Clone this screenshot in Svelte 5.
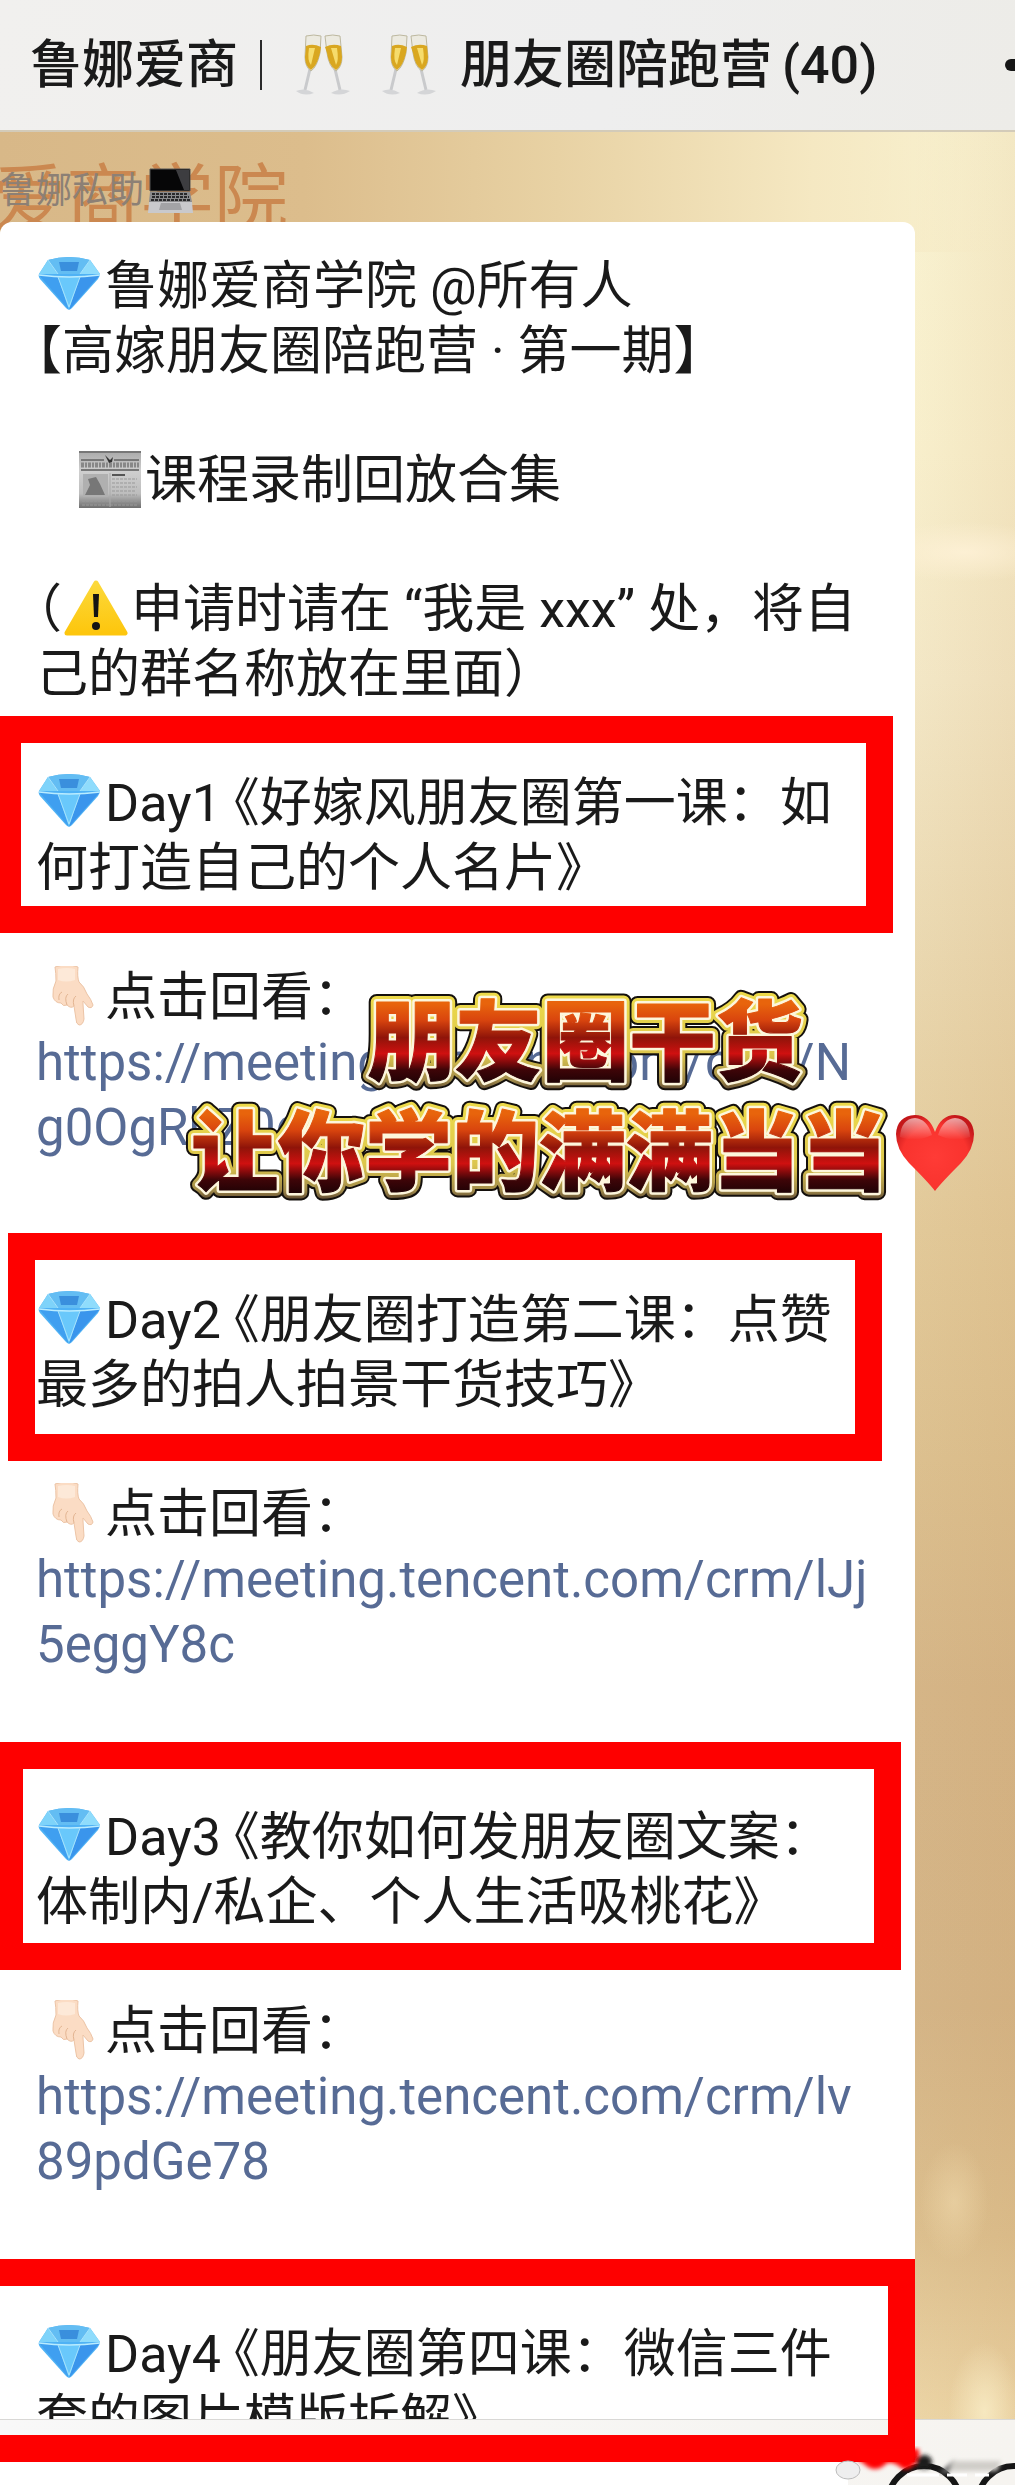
<script lang="ts">
  interface Frame {
    top: number
    right: number
    bottom: number
    left: number
  }

  interface Lesson {
    day: number
    title: string
    url: string | null
    frame: Frame
  }

  const lessons: Lesson[] = [
    {
      day: 1,
      title: '好嫁风朋友圈第一课：如何打造自己的个人名片》',
      url: 'https://meeting.tencent.com/crm/Ng0OgRhZ0c',
      frame: { top: -55, right: -24, bottom: -32, left: -42 },
    },
    {
      day: 2,
      title: '朋友圈打造第二课：点赞最多的拍人拍景干货技巧》',
      url: 'https://meeting.tencent.com/crm/lJj5eggY8c',
      frame: { top: -55, right: -13, bottom: -43, left: -28 },
    },
    {
      day: 3,
      title: '教你如何发朋友圈文案：体制内/私企、个人生活吸桃花》',
      url: 'https://meeting.tencent.com/crm/lv89pdGe78',
      frame: { top: -63, right: -32, bottom: -35, left: -40 },
    },
    {
      day: 4,
      title: '朋友圈第四课：微信三件套的图片模版拆解》',
      url: null,
      frame: { top: -63, right: -46, bottom: -10, left: -66 },
    },
  ]

  const banner = [
    { text: '朋友圈干货', heart: false },
    { text: '让你学的满满当当', heart: true },
  ]

  function frameStyle(f: Frame) {
    return `top:${f.top}px;right:${f.right}px;bottom:${f.bottom}px;left:${f.left}px`
  }
</script>

{#snippet gem()}
  <svg class="emoji" viewBox="0 0 69 60" aria-hidden="true">
    <path d="M12 5 Q33 -1 54 5 L64 19 Q64 21 62 24 L36 53 Q33 56 30 53 L4 24 Q2 21 3 19 Z" fill="#4fb2f5" />
    <path d="M12 5 L22 19 L3 19 Z" fill="#7ed3fa" />
    <path d="M12 5 Q33 -1 54 5 L44 19 L22 19 Z" fill="#63bdf3" />
    <path d="M23 7 H43 L41 16 H25 Z" fill="#3a8fdd" />
    <path d="M54 5 L64 19 L44 19 Z" fill="#8fdcfc" />
    <path d="M3 20 L22 22 L33 55 Z" fill="#3f9ff0" />
    <path d="M22 22 H44 L33 55 Z" fill="#69c8fb" />
    <path d="M44 22 L64 20 L33 55 Z" fill="#3a95ec" />
    <path d="M3 20 Q33 24 64 20" fill="none" stroke="#b9ecff" stroke-width="1.5" />
    <path d="M12 5 L22 19 M54 5 L44 19 M22 22 L33 52 M44 22 L33 52" stroke="#a6e2fc" fill="none" />
  </svg>
{/snippet}

{#snippet hand()}
  <svg class="emoji" viewBox="0 0 69 60" aria-hidden="true">
    <path
      d="M19 1 Q31 -3 42 1 Q41 11 43 16 Q48 20 51 28 Q55 33 57 39 Q56 43 52 41 L47 35 L47 38 L48 53 Q47 59 43 59 Q40 58 40 53 L38 40 Q35 43 31 39 Q27 41 25 37 Q19 37 17 31 Q16 23 20 15 Q20 7 19 1 Z"
      fill="#fbdcc4"
      stroke="#ecc4a6"
    />
    <path d="M23 34 Q22 28 26 26 M31 39 Q28 31 32 28 M38 40 Q36 33 40 30" fill="none" stroke="#e3b592" />
    <path d="M22 3 Q31 1 39 3 L39 14 Q30 17 22 14 Z" fill="#fde9d8" />
  </svg>
{/snippet}

{#snippet glasses()}
  <svg class="glasses" viewBox="0 0 58 64" aria-hidden="true">
    <path d="M16 36 L11 57 M41 36 L46 57" stroke="#c9cacc" stroke-width="3" />
    <path d="M2 58 Q11 54 20 60 Q10 64 2 58 Z M37 60 Q46 54 56 58 Q47 64 37 60 Z" fill="#d4d5d7" />
    <path d="M12 3 Q20 1 27 3 L26 20 Q23 34 17 38 Q11 34 11 24 Z" fill="#eceae0" stroke="#bdb89f" />
    <path d="M31 3 Q39 1 46 3 L48 24 Q48 34 42 38 Q35 34 33 20 Z" fill="#eceae0" stroke="#bdb89f" />
    <path d="M12 13 Q19 10 27 14 L26 20 Q23 33 17 37 Q11 33 11 24 Z" fill="#d9a720" />
    <path d="M31 14 Q39 10 47 13 L48 24 Q48 33 42 37 Q35 33 33 20 Z" fill="#d9a720" />
    <path d="M15 15 L21 15 L17 32 Q13 28 15 15 Z M37 15 L43 15 Q45 28 42 32 Z" fill="#f6dc6c" />
  </svg>
{/snippet}

<div class="page">
  <header class="topbar">
    <h1 class="room">
      <span>鲁娜爱商</span>
      <span class="bar"></span>
      {@render glasses()}
      {@render glasses()}
      <span>朋友圈陪跑营</span>
      <span class="count">(40)</span>
    </h1>
    <button class="more" aria-label="更多"></button>
  </header>

  <main class="chat">
    <div class="watermark" aria-hidden="true">爱商学院</div>

    <div class="sender">
      <span>鲁娜私助</span>
      <svg class="laptop" viewBox="0 0 46 48" aria-hidden="true">
        <path d="M2 2 H42 V24 H2 Z" fill="#060607" stroke="#555" />
        <path d="M28 3 H41 V23 H36 Z" fill="#3d3d40" />
        <path d="M2 25 H42 L44 35 H1 Z" fill="#8b8b8d" />
        <path d="M4 27 H40 M4 30 H41 M3 33 H42" stroke="#29292b" stroke-width="2" stroke-dasharray="3 1" />
        <path d="M1 35 H44 L45 46 H0 Z" fill="#c9c9cc" />
        <path d="M13 36 H32 L34 43 H11 Z" fill="#a3a3a6" />
      </svg>
    </div>

    <article class="bubble">
      <p>
        {@render gem()}鲁娜爱商学院 @所有人<br />
        <span class="half">【</span>高嫁朋友圈陪跑营 · 第一期】
      </p>

      <p class="indent">
        <svg class="emoji" viewBox="0 0 69 60" aria-hidden="true">
          <defs>
            <linearGradient id="paper" x1="0" y1="0" x2="0" y2="1">
              <stop offset="0" stop-color="#a9a9a9" />
              <stop offset="0.35" stop-color="#cfcfcf" />
              <stop offset="0.75" stop-color="#bdbdbd" />
              <stop offset="1" stop-color="#6e6e6e" />
            </linearGradient>
          </defs>
          <rect x="3" y="2" width="62" height="57" fill="url(#paper)" />
          <path d="M3 3 H65 M5 11 H28 M38 11 H63 M5 21 H63" stroke="#777" stroke-width="2" />
          <path d="M5 16 H63" stroke="#888" stroke-width="5" stroke-dasharray="3 1 2 1" />
          <path d="M29 6 L34 11 L37 8 L36 13 L33 14 Z" fill="#333" />
          <rect x="7" y="25" width="25" height="23" fill="#b0b0b0" />
          <path d="M9 46 L14 36 L12 30 L20 28 L24 35 L29 46 Z" fill="#777" />
          <path d="M36 26 H49" stroke="#555" stroke-width="2" />
          <path d="M36 30 H61 M36 34 H60 M36 38 H61 M36 42 H60 M36 46 H61 M6 52 H62 M6 56 H62" stroke="#999" stroke-dasharray="3 1" />
          <path d="M34 24 V58" stroke="#aaa" />
        </svg>课程录制回放合集
      </p>

      <p>
        <span class="half">（</span><svg class="emoji" viewBox="0 0 69 60" aria-hidden="true">
          <defs>
            <linearGradient id="amber" x1="0" y1="0" x2="0" y2="1">
              <stop offset="0" stop-color="#fcd93a" />
              <stop offset="1" stop-color="#fdc60d" />
            </linearGradient>
          </defs>
          <path d="M34 5 L63 55 H5 Z" fill="url(#amber)" stroke="url(#amber)" stroke-width="5" stroke-linejoin="round" />
          <path d="M31 16 H37 L36 39 H32 Z" fill="#141414" />
          <circle cx="34" cy="48" r="4" fill="#141414" />
        </svg>申请时请在 “我是 xxx” 处，将自己的群名称放在里面）
      </p>

      {#each lessons as lesson (lesson.day)}
        <section class="lesson">
          <h2>
            {@render gem()}Day{lesson.day} <span class="half">《</span>{lesson.title}
            <span class="frame" style={frameStyle(lesson.frame)}></span>
          </h2>
          {#if lesson.url}
            <div class="replay">
              {@render hand()}点击回看：
              <a href={lesson.url}>{lesson.url}</a>
            </div>
          {/if}
        </section>
      {/each}
    </article>

    <div class="banner">
      <svg class="paints" aria-hidden="true">
        <defs>
          <linearGradient id="fire" gradientUnits="userSpaceOnUse" x1="0" y1="16" x2="0" y2="96">
            <stop offset="0" stop-color="#e8640c" />
            <stop offset="0.2" stop-color="#d9450e" />
            <stop offset="0.42" stop-color="#8f1409" />
            <stop offset="0.62" stop-color="#cf1010" />
            <stop offset="0.82" stop-color="#3f0508" />
            <stop offset="1" stop-color="#1c0205" />
          </linearGradient>
          <linearGradient id="gold" gradientUnits="userSpaceOnUse" x1="0" y1="10" x2="0" y2="104">
            <stop offset="0" stop-color="#ecd94a" />
            <stop offset="0.6" stop-color="#dcc64c" />
            <stop offset="0.88" stop-color="#a08a4a" />
            <stop offset="1" stop-color="#4a3428" />
          </linearGradient>
        </defs>
      </svg>
      {#each banner as line, i (line.text)}
        <div class="banner-line">
          <svg width={line.text.length * 87 + 16} height="110">
            <defs>
              <text id="line-{i}" x="8" y="86">{line.text}</text>
            </defs>
            <use href="#line-{i}" class="edge" />
            <use href="#line-{i}" class="gold" />
            <use href="#line-{i}" class="cream" />
            <use href="#line-{i}" class="fire" />
          </svg>
          {#if line.heart}
            <svg class="heart" viewBox="0 0 80 80" aria-hidden="true">
              <defs>
                <radialGradient id="red" cx="0.5" cy="0.55" r="0.6">
                  <stop offset="0" stop-color="#ff3b36" />
                  <stop offset="0.7" stop-color="#f9332e" />
                  <stop offset="1" stop-color="#c4171a" />
                </radialGradient>
                <linearGradient id="shine" x1="0" y1="0" x2="0" y2="1">
                  <stop offset="0" stop-color="#fff" stop-opacity="0.6" />
                  <stop offset="1" stop-color="#fff" stop-opacity="0" />
                </linearGradient>
              </defs>
              <path d="M40 78 Q34 70 14 50 Q1 36 1 21 Q2 3 20 2 Q34 2 40 19 Q46 2 60 2 Q78 3 79 21 Q79 36 66 50 Q46 70 40 78 Z" fill="url(#red)" />
              <path d="M5 24 Q6 6 20 5 Q32 6 37 22 Q20 30 5 24 Z M43 22 Q48 6 60 5 Q74 6 75 24 Q60 30 43 22 Z" fill="url(#shine)" />
            </svg>
          {/if}
        </div>
      {/each}
    </div>
  </main>

  <footer class="composer">
    <input class="field" type="text" aria-label="输入消息" />
    <div class="tools">
      <button class="tool" aria-label="表情">
        <svg viewBox="0 0 80 80" aria-hidden="true">
          <circle cx="40" cy="40" r="36" fill="none" stroke="#161616" stroke-width="6" />
        </svg>
      </button>
      <button class="tool" aria-label="更多功能">
        <svg viewBox="0 0 80 80" aria-hidden="true">
          <circle cx="40" cy="40" r="36" fill="none" stroke="#161616" stroke-width="6" />
        </svg>
      </button>
    </div>
  </footer>

  <svg class="smudge" viewBox="0 0 180 50" aria-hidden="true">
    <defs>
      <filter id="soft"><feGaussianBlur stdDeviation="2" /></filter>
    </defs>
    <ellipse cx="13" cy="35" rx="12" ry="9" fill="#eee" stroke="#bbb" />
    <g filter="url(#soft)">
      <path d="M20 14 H84 V18 Q80 36 68 34 Q58 26 52 28 Q40 40 28 28 Q20 26 20 14 Z" fill="#f00" />
      <ellipse cx="89" cy="27" rx="8" ry="7" fill="#1c1c1c" />
      <path d="M104 38 L120 24 L114 38 Z" fill="#666" />
      <path d="M118 26 H166 L162 36 H114 Z" fill="#d0cec9" />
    </g>
    <path d="M72 40 H104 M112 40 H132 M140 40 H154" stroke="#fff" stroke-width="3" />
  </svg>
</div>

<style>
  :global(body) {
    margin: 0;
  }

  .page {
    display: flex;
    flex-direction: column;
    height: 100vh;
    overflow: hidden;
    position: relative;
    font-family: Roboto, 'Noto Sans CJK SC', sans-serif;
    font-size: 52px;
    line-height: 65px;
    color: #1a1a1a;
  }

  .topbar {
    flex: none;
    display: flex;
    align-items: center;
    justify-content: space-between;
    box-sizing: border-box;
    height: 132px;
    padding-left: 30px;
    background: linear-gradient(100deg, #f1f0ee, #eeeeee 60%, #edece8);
    border-bottom: 2px solid #d3cbb9;
  }

  .room {
    display: flex;
    align-items: center;
    margin: 0;
    font-size: 52px;
    font-weight: 500;
    white-space: nowrap;
  }

  .bar {
    width: 2px;
    height: 50px;
    margin: 0 32px 0 22px;
    background: #2a2a2a;
  }

  .glasses {
    width: 58px;
    height: 64px;
    margin-right: 28px;
  }

  .room .glasses + span {
    margin-left: -6px;
  }

  .count {
    margin-left: 10px;
  }

  .more {
    width: 10px;
    height: 12px;
    padding: 0;
    border: 0;
    border-radius: 6px 0 0 6px;
    background: #161616;
  }

  .chat {
    flex: 1;
    min-height: 0;
    background:
      linear-gradient(90deg, #d8b888, #dcbd8c 30%, #e8d2a4 55%, #f5e8c2 80%, rgba(249, 241, 208, 0)) 0 0 / 100% 120px no-repeat,
      radial-gradient(ellipse 100px 30px at 95% 420px, rgba(255, 242, 216, 0.8), rgba(255, 242, 216, 0)),
      radial-gradient(ellipse 34px 60px at 94% 2070px, rgba(243, 222, 178, 0.5), rgba(243, 222, 178, 0)),
      radial-gradient(ellipse 36px 70px at 97% 2280px, rgba(250, 238, 200, 0.8), rgba(250, 238, 200, 0)),
      linear-gradient(90deg, rgba(200, 150, 90, 0) 90%, rgba(200, 150, 90, 0.12)),
      linear-gradient(#f9f3d2, #f8efcc 14%, #f3e7c6 24%, #ead8b0 36%, #e2c999 48%, #dcc08f 58%, #d5b587 68%, #d4b486 82%, #dcbf8e 92%, #ecd5a6);
    position: relative;
  }

  .watermark {
    position: absolute;
    top: 28px;
    left: -8px;
    font-size: 74px;
    line-height: 80px;
    color: #cb8850;
  }

  .sender {
    display: flex;
    align-items: center;
    gap: 4px;
    height: 90px;
    box-sizing: border-box;
    padding-top: 28px;
    font-size: 36px;
    line-height: 48px;
    color: #8c8075;
    position: relative;
  }

  .laptop {
    width: 46px;
    height: 48px;
  }

  .bubble {
    display: flex;
    flex-direction: column;
    gap: 64px;
    margin-right: 100px;
    padding: 32px 46px 40px 36px;
    background: #fff;
    border-radius: 12px;
    position: relative;
  }

  .bubble p {
    margin: 0;
  }

  .bubble .indent {
    padding-left: 40px;
  }

  .emoji {
    width: 69px;
    height: 60px;
    vertical-align: -11px;
  }

  .half {
    font-feature-settings: 'halt' 1;
  }

  .lesson {
    display: flex;
    flex-direction: column;
    gap: 64px;
    margin-bottom: 64px;
  }

  .lesson h2 {
    margin: 0;
    font-size: 52px;
    font-weight: 400;
    position: relative;
  }

  .frame {
    position: absolute;
    z-index: 3;
    border: 27px solid #fe0000;
    pointer-events: none;
  }

  .replay a {
    display: block;
    margin-right: -6px;
    font-size: 51px;
    color: #576b95;
    text-decoration: none;
    word-break: break-all;
  }

  .banner {
    position: absolute;
    top: 856px;
    left: 183px;
    display: flex;
    flex-direction: column;
    align-items: center;
  }

  .paints {
    position: absolute;
    width: 0;
    height: 0;
  }

  .banner-line {
    display: flex;
    align-items: center;
    height: 110px;
  }

  .banner-line:not(:last-child) {
    padding-left: 12px;
  }

  .banner text {
    font-family: 'Noto Sans CJK SC', sans-serif;
    font-size: 87px;
    font-weight: 900;
  }

  .banner use {
    stroke-linejoin: round;
  }

  .edge {
    fill: #14100c;
    stroke: #14100c;
    stroke-width: 16px;
  }

  .gold {
    fill: url(#gold);
    stroke: url(#gold);
    stroke-width: 12px;
  }

  .cream {
    fill: #fdf6dc;
    stroke: #fdf6dc;
    stroke-width: 6px;
  }

  .fire {
    fill: url(#fire);
    stroke: url(#fire);
    stroke-width: 1px;
  }

  .heart {
    width: 80px;
    height: 80px;
  }

  .composer {
    flex: none;
    display: flex;
    justify-content: space-between;
    box-sizing: border-box;
    height: 66px;
    padding-top: 26px;
    border-top: 1px solid #d9d8d6;
    background: linear-gradient(90deg, #f8f8f8, #f6f4f0);
    position: relative;
    z-index: 1;
  }

  .field {
    flex: 1;
    height: 80px;
    padding: 0 36px;
    border: 0;
    background: #fff;
    font: inherit;
  }

  .tools {
    display: flex;
    gap: 10px;
    width: 131px;
    margin-left: 36px;
    margin-top: 16px;
  }

  .tool {
    flex: none;
    width: 80px;
    height: 80px;
    padding: 0;
    border: 0;
    background: none;
  }

  .tool svg {
    display: block;
  }

  .smudge {
    position: absolute;
    right: 0;
    bottom: 0;
    z-index: 4;
    width: 180px;
    height: 50px;
  }
</style>
